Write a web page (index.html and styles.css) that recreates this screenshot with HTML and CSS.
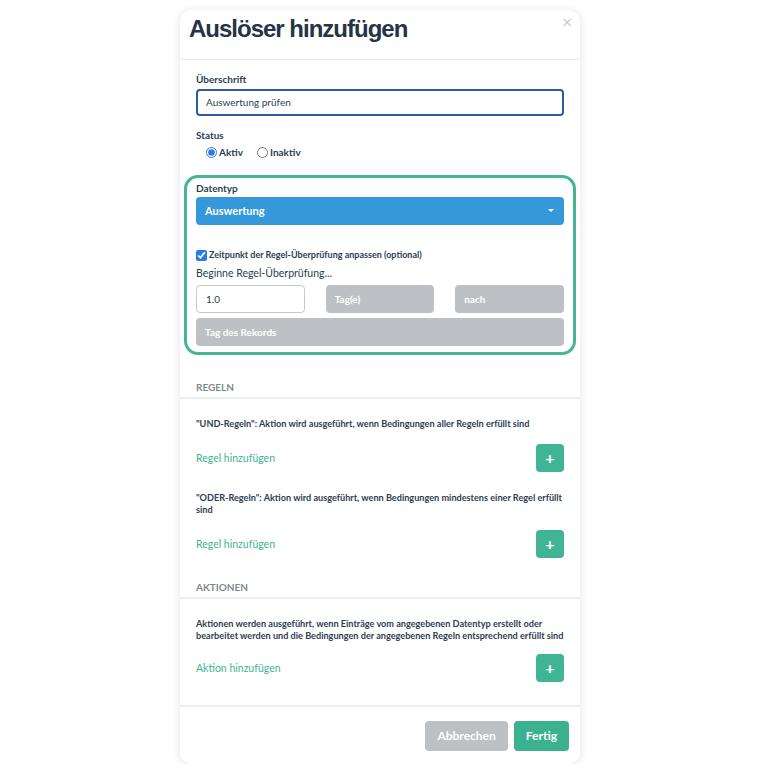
FILE: index.html
```html
<!DOCTYPE html>
<html lang="de">
<head>
<meta charset="utf-8">
<link rel="stylesheet" href="styles.css">
</head>
<body>
<div class="modal">
  <div class="modal-header">
    <h1 class="title">Auslöser hinzufügen</h1>
    <span class="close">×</span>
  </div>
  <div class="section">
    <div class="label">Überschrift</div>
    <div class="text-input focused">Auswertung prüfen</div>
    <div class="label status-label">Status</div>
    <div class="radios">
      <label class="radio"><input type="radio" name="s" checked> Aktiv</label>
      <label class="radio"><input type="radio" name="s"> Inaktiv</label>
    </div>
    <div class="highlight">
      <div class="label">Datentyp</div>
      <div class="select">Auswertung<span class="caret"></span></div>
      <label class="check"><input type="checkbox" checked>Zeitpunkt der Regel-Überprüfung anpassen (optional)</label>
      <div class="hint">Beginne Regel-Überprüfung...</div>
      <div class="triple">
        <div class="text-input plain">1.0</div>
        <div class="gray">Tag(e)</div>
        <div class="gray">nach</div>
      </div>
      <div class="gray wide">Tag des Rekords</div>
    </div>
  </div>
  <div class="sec-title">REGELN</div>
  <div class="section rules">
    <p class="desc">"UND-Regeln": Aktion wird ausgeführt, wenn Bedingungen aller Regeln erfüllt sind</p>
    <div class="add-row"><span class="link">Regel hinzufügen</span><span class="plus">+</span></div>
    <p class="desc">"ODER-Regeln": Aktion wird ausgeführt, wenn Bedingungen mindestens einer Regel erfüllt sind</p>
    <div class="add-row"><span class="link">Regel hinzufügen</span><span class="plus">+</span></div>
  </div>
  <div class="sec-title sec-title-2">AKTIONEN</div>
  <div class="section actions">
    <p class="desc">Aktionen werden ausgeführt, wenn Einträge vom angegebenen Datentyp erstellt oder bearbeitet werden und die Bedingungen der angegebenen Regeln entsprechend erfüllt sind</p>
    <div class="add-row"><span class="link">Aktion hinzufügen</span><span class="plus">+</span></div>
  </div>
  <div class="modal-footer">
    <span class="btn btn-gray">Abbrechen</span>
    <span class="btn btn-green">Fertig</span>
  </div>
</div>
</body>
</html>
```

FILE: styles.css
```css
* { box-sizing: border-box; }
body {
  margin: 0;
  background: #fff;
  font-family: Lato, "Noto Sans", sans-serif;
  color: #2c3e50;
}
.modal {
  width: 400px;
  margin: 10px auto 0;
  background: #fff;
  border-radius: 12px;
  box-shadow: 0 1px 8px rgba(0,0,0,0.12);
  overflow: hidden;
}
.modal-header {
  position: relative;
  height: 50px;
  border-bottom: 1px solid #e6e8ea;
  padding: 4px 9px 0;
}
.title {
  margin: 0;
  font-family: "Liberation Sans", Arial, sans-serif;
  font-weight: bold;
  font-size: 24px;
  letter-spacing: -1px;
  line-height: 30px;
  color: #253447;
}
.close {
  position: absolute;
  right: 7px;
  top: 4px;
  font-size: 14px;
  color: #c4c7ca;
  font-family: "DejaVu Sans", sans-serif;
}
.section { padding: 0 16px; }
.label {
  font-size: 10px;
  font-weight: bold;
  line-height: 14px;
  padding-top: 12px;
}
.text-input {
  height: 27px;
  margin-top: 3px;
  border-radius: 4px;
  font-size: 10px;
  line-height: 23px;
  padding: 0 9px;
}
.focused { border: 2px solid #2e5b9e; padding-left: 8px; }
.status-label { padding-top: 12px; }
.radios {
  display: flex;
  gap: 14px;
  padding-left: 10px;
  margin-top: 3px;
  height: 14px;
}
.radio {
  display: flex;
  align-items: center;
  font-size: 10px;
  font-weight: bold;
  gap: 2px;
}
.radio input, .check input {
  margin: 0;
  width: 11px;
  height: 11px;
  accent-color: #2c7be5;
}
.highlight {
  margin: 16px -12px 0;
  border: 3px solid #46b495;
  border-radius: 14px;
  padding: 0 9px 6px;
}
.highlight > .label { padding-top: 3px; }
.select {
  position: relative;
  margin-top: 2px;
  height: 28px;
  background: #3498db;
  border-radius: 4px;
  color: #fff;
  font-size: 11px;
  font-weight: bold;
  line-height: 28px;
  padding-left: 9px;
}
.caret {
  position: absolute;
  right: 10px;
  top: 12px;
  border-left: 3px solid transparent;
  border-right: 3px solid transparent;
  border-top: 3px solid #fff;
}
.check {
  display: flex;
  align-items: center;
  gap: 2px;
  margin-top: 23px;
  font-size: 9px;
  font-weight: bold;
  line-height: 14px;
}
.hint {
  font-size: 10.5px;
  line-height: 16px;
  margin-top: 3px;
}
.triple {
  display: grid;
  grid-template-columns: repeat(3, 1fr);
  gap: 21px;
  margin-top: 4px;
}
.plain {
  margin-top: 0;
  height: 28px;
  border: 1px solid #c5c9cd;
  line-height: 26px;
  font-size: 10px;
}
.gray {
  height: 28px;
  background: #bdc1c5;
  border-radius: 4px;
  color: #fff;
  font-size: 10px;
  font-weight: bold;
  line-height: 28px;
  padding-left: 9px;
}
.wide { margin-top: 5px; }
.sec-title {
  padding: 25px 16px 3px;
  font-size: 10px;
  font-weight: bold;
  color: #7f8a8e;
  line-height: 14px;
  border-bottom: 2px solid #eceeef;
}
.sec-title-2 { padding-top: 22px; }
.desc {
  margin: 0;
  font-size: 9.15px;
  font-weight: bold;
  line-height: 12px;
}
.rules .desc { padding-top: 19px; }
.rules .desc + .add-row + .desc { padding-top: 20px; }
.add-row {
  display: flex;
  justify-content: space-between;
  align-items: center;
  margin-top: 14px;
}
.link {
  color: #3fb393;
  font-size: 10.5px;
}
.plus {
  width: 28px;
  height: 28px;
  border-radius: 4px;
  background: #40b596;
  color: #fff;
  font-size: 16px;
  font-weight: bold;
  text-align: center;
  line-height: 27px;
}
.actions { padding-top: 19px; padding-bottom: 23px; }
.actions .add-row { margin-top: 12px; }
.modal-footer {
  border-top: 2px solid #eceeef;
  display: flex;
  justify-content: flex-end;
  gap: 6px;
  padding: 14px 11px 13px;
}
.btn {
  height: 30px;
  border-radius: 4px;
  color: #fff;
  font-size: 12px;
  font-weight: bold;
  line-height: 30px;
  padding: 0 12px;
}
.btn-gray { background: #bdc1c5; }
.btn-green { background: #3bb28e; }
```
